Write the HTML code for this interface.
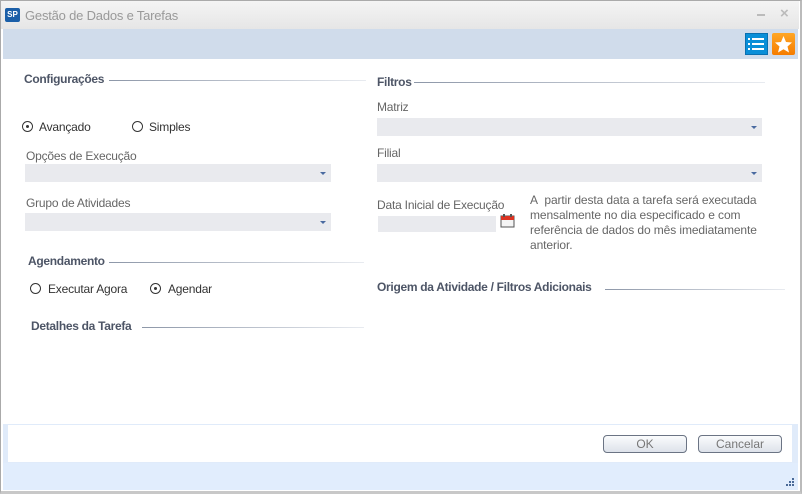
<!DOCTYPE html>
<html><head><meta charset="utf-8"><style>
*{margin:0;padding:0;box-sizing:border-box}
body{width:802px;height:494px;background:#fff;font-family:"Liberation Sans","DejaVu Sans",sans-serif;font-size:12px;color:#555;position:relative;overflow:hidden}
.a{position:absolute}
.h{position:absolute;font-weight:bold;color:#4d5566;font-size:12px;white-space:nowrap;letter-spacing:-0.3px}
.ln{position:absolute;height:1px;background:linear-gradient(90deg,#8d97a8,#e8ebf0)}
.lab{position:absolute;color:#666;white-space:nowrap;letter-spacing:-0.2px}
.sel{position:absolute;height:18px;background:#e9eaee}
.sel:after{content:"";position:absolute;right:5px;top:8px;border-left:3px solid transparent;border-right:3px solid transparent;border-top:3px solid #4a6aa0}
.rad{position:absolute;width:11px;height:11px;border:1px solid #333;border-radius:50%}
.rad.on:after{content:"";position:absolute;left:3px;top:3px;width:3px;height:3px;background:#333;border-radius:50%}
.rt{position:absolute;color:#333;white-space:nowrap;letter-spacing:-0.2px}
.btn{position:absolute;height:18px;border:1px solid #6b7484;border-radius:4px;background:linear-gradient(#fbfcfd,#dde2ea);color:#777;text-align:center;line-height:16px;font-size:12px}
</style></head><body>
<div class="a" style="left:0;top:0;width:802px;height:494px;border:1px solid #aaa;border-right:2px solid #bbb;border-bottom:3px solid #c8c8c8"></div>
<div class="a" style="left:1px;top:1px;width:798px;height:28px;background:linear-gradient(#f4f4f4,#e6e6e6)"></div>
<div class="a" style="left:5px;top:8px;width:15px;height:14px;background:#1b5fa8;border-radius:2px;color:#fff;font-size:8px;font-weight:bold;line-height:13px;text-align:center">SP</div>
<div class="a" style="left:25px;top:8px;color:#999;font-size:13px;letter-spacing:-0.2px">Gestão de Dados e Tarefas</div>
<div class="a" style="left:757px;top:14px;width:8px;height:2px;background:#bbb"></div>
<div class="a" style="left:780px;top:5px;color:#bbb;font-size:15px;font-weight:bold">×</div>
<div class="a" style="left:3px;top:29px;width:795px;height:30px;background:#d0dceb"></div>
<div class="a" style="left:745px;top:33px;width:23px;height:22px;background:#0a8fd8;border:1px solid #0a70b0"></div>
<svg class="a" style="left:745px;top:33px" width="23" height="22"><g fill="#fff"><rect x="3" y="5" width="2" height="2"/><rect x="7" y="5" width="12" height="2"/><rect x="3" y="10" width="2" height="2"/><rect x="7" y="10" width="12" height="2"/><rect x="3" y="15" width="2" height="2"/><rect x="7" y="15" width="12" height="2"/></g></svg>
<div class="a" style="left:772px;top:33px;width:23px;height:22px;background:linear-gradient(#ffa726,#f57c00);border-radius:2px"></div>
<svg class="a" style="left:772px;top:33px" width="23" height="22"><polygon fill="#fff" points="11.5,3 14,9 20,9.5 15.5,13.5 17,19.5 11.5,16.3 6,19.5 7.5,13.5 3,9.5 9,9"/></svg>

<div class="h" style="left:24px;top:72px">Configurações</div><div class="ln" style="left:109px;top:80px;width:257px"></div>
<div class="h" style="left:377px;top:75px">Filtros</div><div class="ln" style="left:414px;top:82px;width:351px"></div>
<div class="lab" style="left:377px;top:100px">Matriz</div><div class="sel" style="left:377px;top:118px;width:385px"></div>
<div class="lab" style="left:377px;top:146px">Filial</div><div class="sel" style="left:377px;top:164px;width:385px"></div>
<div class="rad on" style="left:22px;top:121px"></div><div class="rt" style="left:39px;top:120px">Avançado</div>
<div class="rad" style="left:132px;top:121px"></div><div class="rt" style="left:149px;top:120px">Simples</div>
<div class="lab" style="left:26px;top:149px">Opções de Execução</div><div class="sel" style="left:25px;top:164px;width:306px"></div>
<div class="lab" style="left:26px;top:196px">Grupo de Atividades</div><div class="sel" style="left:25px;top:213px;width:306px"></div>
<div class="lab" style="left:377px;top:198px">Data Inicial de Execução</div>
<div class="a" style="left:378px;top:216px;width:118px;height:16px;background:#e9eaee"></div>
<svg class="a" style="left:500px;top:213px" width="15" height="15"><rect x="1" y="3" width="13" height="11" fill="#f4f4f4" stroke="#555"/><rect x="1" y="3" width="13" height="4" fill="#d32"/><rect x="3" y="1" width="2" height="3" fill="#555"/><rect x="10" y="1" width="2" height="3" fill="#555"/></svg>
<div class="a" style="left:530px;top:193px;color:#666;line-height:15px;width:250px;letter-spacing:-0.1px">A&nbsp; partir desta data a tarefa será executada mensalmente no dia especificado e com referência de dados do mês imediatamente anterior.</div>
<div class="h" style="left:28px;top:254px">Agendamento</div><div class="ln" style="left:109px;top:262px;width:255px"></div>
<div class="rad" style="left:30px;top:283px"></div><div class="rt" style="left:48px;top:282px">Executar Agora</div>
<div class="rad on" style="left:150px;top:283px"></div><div class="rt" style="left:168px;top:282px">Agendar</div>
<div class="h" style="left:377px;top:280px">Origem da Atividade / Filtros Adicionais</div><div class="ln" style="left:605px;top:289px;width:180px"></div>
<div class="h" style="left:31px;top:319px">Detalhes da Tarefa</div><div class="ln" style="left:142px;top:327px;width:222px"></div>

<div class="a" style="left:3px;top:424px;width:795px;height:39px;background:#e0ebfa"></div>
<div class="a" style="left:8px;top:425px;width:784px;height:37px;background:#fff"></div>
<div class="a" style="left:3px;top:463px;width:795px;height:27px;background:#e1edfd"></div>
<div class="btn" style="left:603px;top:435px;width:84px">OK</div>
<div class="btn" style="left:698px;top:435px;width:84px">Cancelar</div>
<svg class="a" style="left:785px;top:477px" width="10" height="10"><g fill="#4a6a98"><rect x="7" y="1" width="2" height="2"/><rect x="4" y="4" width="2" height="2"/><rect x="7" y="4" width="2" height="2"/><rect x="1" y="7" width="2" height="2"/><rect x="4" y="7" width="2" height="2"/><rect x="7" y="7" width="2" height="2"/></g></svg>
</body></html>
